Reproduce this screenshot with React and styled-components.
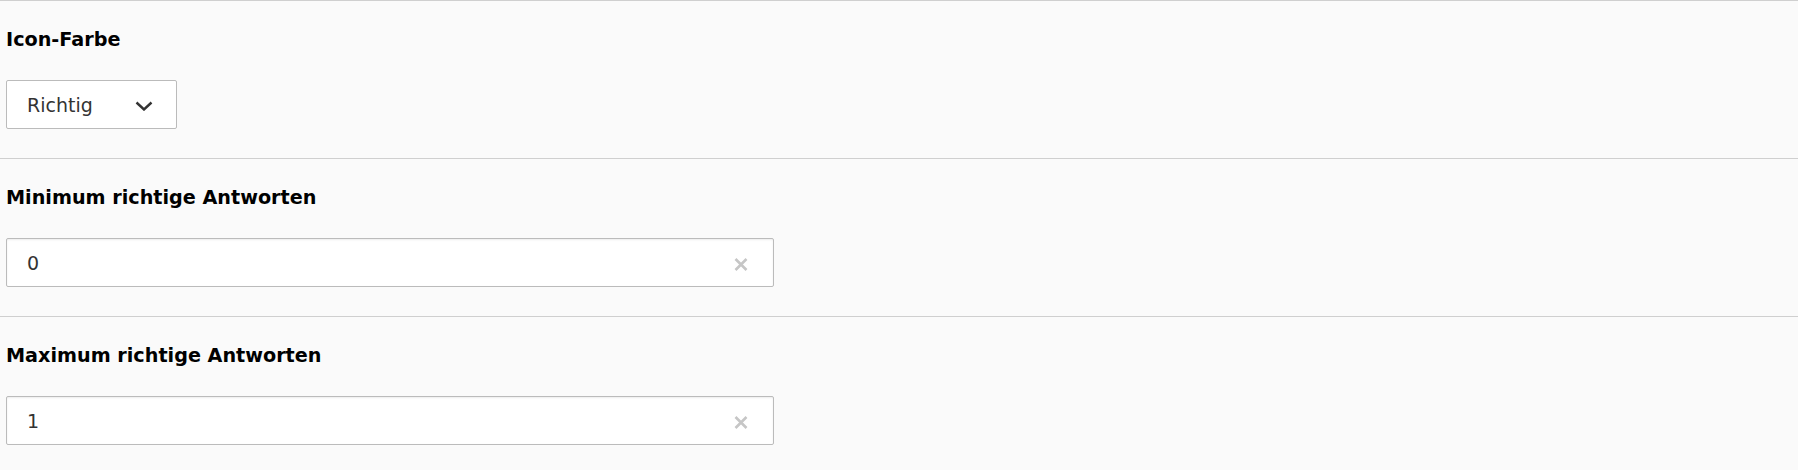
import React from 'react'
import styled, {createGlobalStyle} from 'styled-components'

const GlobalStyle = createGlobalStyle`
    html, body {
        margin: 0;
        padding: 0;
        background-color: #fafafa;
    }
    body {
        font-family: "DejaVu Sans", Verdana, sans-serif;
    }
`

const Chevron = () => (
    <svg width="18" height="10" viewBox="0 0 18 10">
        <path d="M1.5 1.5 L9 8.5 L16.5 1.5" fill="none" stroke="#333" strokeWidth="2.4" />
    </svg>
)

const ClearIcon = () => (
    <svg width="14" height="13" viewBox="0 0 14 13">
        <path d="M1.5 1 L12.5 12 M12.5 1 L1.5 12" fill="none" stroke="#c6c6c6" strokeWidth="2.6" />
    </svg>
)

export default function App() {
    return (
        <Container>
            <GlobalStyle />
            <Section>
                <Label>Icon-Farbe</Label>
                <Select>
                    <Value>Richtig</Value>
                    <Chevron />
                </Select>
            </Section>
            <Section>
                <Label>Minimum richtige Antworten</Label>
                <Input>
                    <Value>0</Value>
                    <Clear><ClearIcon /></Clear>
                </Input>
            </Section>
            <Section>
                <Label>Maximum richtige Antworten</Label>
                <Input>
                    <Value>1</Value>
                    <Clear><ClearIcon /></Clear>
                </Input>
            </Section>
        </Container>
    )
}

const Container = styled.div`
    display: flex;
    flex-direction: column;
    width: 100%;
    height: 470px;
    background-color: #fafafa;
`

const Section = styled.div`
    display: flex;
    flex-direction: column;
    align-items: flex-start;
    border-top: 1px solid #cfcfcf;
    padding: 27px 0 29px 6px;
`

const Label = styled.div`
    font-size: 19.2px;
    line-height: 23px;
    font-weight: bold;
    color: #000;
    margin-bottom: 29px;
`

const Field = styled.div`
    display: flex;
    align-items: center;
    box-sizing: border-box;
    height: 49px;
    background-color: #fff;
    border: 1px solid #bbb;
    border-radius: 2px;
    font-size: 19px;
    color: #333;
`

const Select = styled(Field)`
    width: 171px;
    padding: 2px 23px 0 20px;
    justify-content: space-between;
`

const Input = styled(Field)`
    width: 768px;
    padding: 2px 19px 0 20px;
    justify-content: space-between;
    box-shadow: inset 0 1px 2px rgba(0, 0, 0, 0.08);
`

const Value = styled.span`
    line-height: 1;
`

const Clear = styled.span`
    display: flex;
    align-items: center;
    margin-top: 2px;
    margin-right: 6px;
`
